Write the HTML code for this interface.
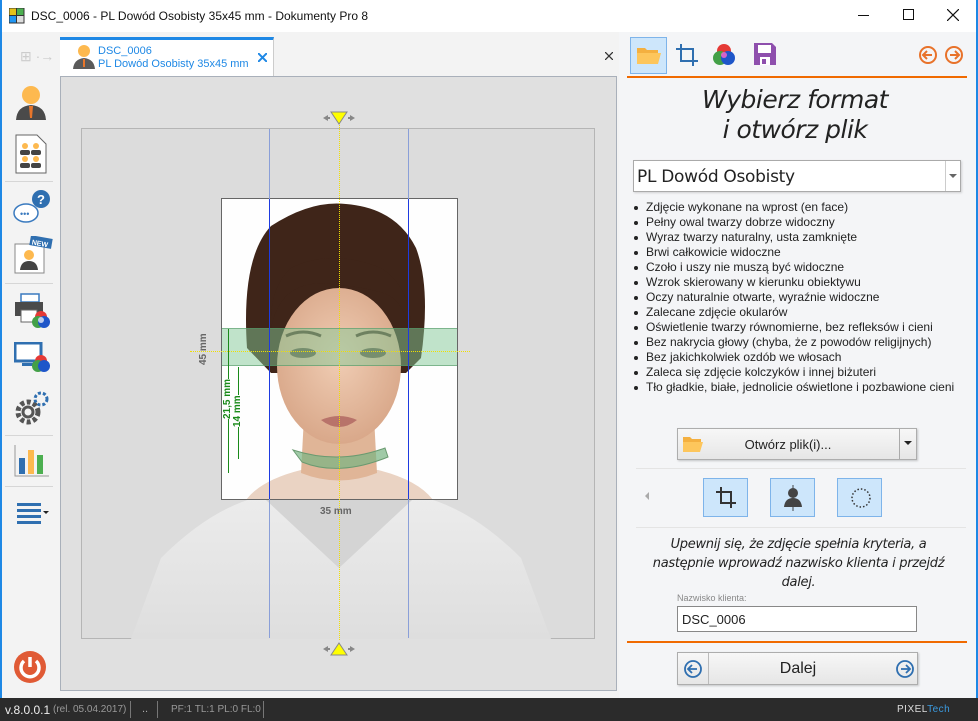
<!DOCTYPE html>
<html><head><meta charset="utf-8"><style>
*{box-sizing:border-box;margin:0;padding:0}
body{width:978px;height:721px;overflow:hidden;background:#f3f3f3;font-family:"Liberation Sans",sans-serif;position:relative;font-size:12px;color:#222}
.abs{position:absolute}
.title{left:0;top:0;width:978px;height:32px;background:#fff;font-size:12px}
.sb{left:0;top:0;width:2px;height:721px;background:#1e88e5}
.sep{position:absolute;height:1px;background:#d6d6d6}
ul{list-style:none}
li{position:relative;padding-left:14px;height:15px;line-height:15px;font-size:12px;color:#222}
li:before{content:"";position:absolute;left:2px;top:6px;width:4px;height:4px;border-radius:2px;background:#222}
.btn{background:linear-gradient(#f7f7f7,#e6e6e6);border:1px solid #adadad;box-shadow:1px 1px 2px rgba(0,0,0,.2)}
.tb{background:#cde6fb;border:1px solid #7eb4ea}
</style></head><body>
<div class="abs title">
 <svg class="abs" style="left:9px;top:8px" width="16" height="16"><rect x="0" y="0" width="7" height="7" fill="#e5c21a"/><rect x="8" y="0" width="7" height="7" fill="#4caf50"/><rect x="0" y="8" width="7" height="7" fill="#2196f3"/><rect x="8" y="8" width="7" height="7" fill="#ddd"/><rect x="0" y="0" width="15" height="15" fill="none" stroke="#333"/><line x1="7.5" y1="0" x2="7.5" y2="15" stroke="#333"/><line x1="0" y1="7.5" x2="15" y2="7.5" stroke="#333"/></svg>
 <div class="abs" style="left:31px;top:9px;color:#111">DSC_0006 - PL Dowód Osobisty 35x45 mm - Dokumenty Pro 8</div>
 <div class="abs" style="left:858px;top:15px;width:11px;height:1px;background:#111"></div>
 <div class="abs" style="left:903px;top:9px;width:11px;height:11px;border:1px solid #111"></div>
 <svg class="abs" style="left:947px;top:9px" width="12" height="12"><path d="M0 0 L12 12 M12 0 L0 12" stroke="#111" stroke-width="1.2"/></svg>
</div>
<div class="abs sb"></div>
<div class="abs" style="left:976px;top:0;width:2px;height:721px;background:#1e88e5"></div>
<!-- sidebar icons -->
<div class="abs" style="left:20px;top:48px;color:#ccc;font-size:14px">⊞ ·→</div>
<svg class="abs" style="left:14px;top:84px" width="34" height="38"><circle cx="17" cy="11" r="9" fill="#fdb94f"/><path d="M2 36 Q3 22 17 21 Q31 22 32 36Z" fill="#4a4a4a"/><path d="M15 22 L19 22 L18 34 L16 34Z" fill="#e8762b"/></svg>
<svg class="abs" style="left:15px;top:134px" width="32" height="40"><path d="M1 1 H22 L31 10 V39 H1Z" fill="#fff" stroke="#666"/><g fill="#fdb94f"><circle cx="10" cy="12" r="3"/><circle cx="21" cy="12" r="3"/><circle cx="10" cy="25" r="3"/><circle cx="21" cy="25" r="3"/></g><g fill="#444"><rect x="5" y="16" width="10" height="5" rx="2"/><rect x="16" y="16" width="10" height="5" rx="2"/><rect x="5" y="29" width="10" height="5" rx="2"/><rect x="16" y="29" width="10" height="5" rx="2"/></g></svg>
<div class="sep" style="left:5px;top:181px;width:48px"></div>
<svg class="abs" style="left:12px;top:188px" width="38" height="40"><ellipse cx="14" cy="25" rx="12" ry="9" fill="#fff" stroke="#3a7abf" stroke-width="1.5"/><text x="8" y="29" font-size="9" fill="#3a7abf">•••</text><circle cx="29" cy="11" r="9" fill="#2f6fb0"/><text x="25" y="16" font-size="13" font-weight="bold" fill="#fff" font-family="Liberation Sans">?</text></svg>
<svg class="abs" style="left:13px;top:236px" width="40" height="40"><rect x="2" y="8" width="29" height="29" fill="#fff" stroke="#888"/><circle cx="16" cy="19" r="5" fill="#fdb94f"/><path d="M7 34 Q8 25 16 25 Q24 25 25 34Z" fill="#444"/><rect x="17" y="1" width="22" height="10" fill="#2f6fb0" transform="rotate(10 28 6)"/><text x="19" y="10" font-size="7" fill="#fff" font-weight="bold" transform="rotate(10 28 6)">NEW</text></svg>
<div class="sep" style="left:5px;top:283px;width:48px"></div>
<svg class="abs" style="left:14px;top:292px" width="38" height="38"><rect x="7" y="2" width="18" height="8" fill="#fff" stroke="#3a7abf" stroke-width="1.5"/><rect x="1" y="10" width="28" height="14" fill="#4a4a4a"/><rect x="7" y="18" width="16" height="12" fill="#fff" stroke="#666"/><circle cx="27" cy="25" r="6" fill="#e53935"/><circle cx="24" cy="30" r="6" fill="#43a047"/><circle cx="30" cy="30" r="6" fill="#1e56c9"/><circle cx="27" cy="28" r="3" fill="#fff" opacity=".7"/></svg>
<svg class="abs" style="left:14px;top:342px" width="38" height="34"><rect x="1" y="1" width="26" height="18" fill="#fff" stroke="#2f6fb0" stroke-width="3"/><rect x="8" y="21" width="12" height="3" fill="#2f6fb0"/><circle cx="27" cy="19" r="6" fill="#e53935"/><circle cx="24" cy="24" r="6" fill="#43a047"/><circle cx="30" cy="24" r="6" fill="#1e56c9"/></svg>
<svg class="abs" style="left:14px;top:390px" width="36" height="36"><circle cx="14" cy="22" r="10" fill="none" stroke="#555" stroke-width="5" stroke-dasharray="4 2.5"/><circle cx="14" cy="22" r="5" fill="none" stroke="#555" stroke-width="3"/><circle cx="27" cy="9" r="6" fill="none" stroke="#2f6fb0" stroke-width="3" stroke-dasharray="3 2"/></svg>
<div class="sep" style="left:5px;top:435px;width:48px"></div>
<svg class="abs" style="left:14px;top:444px" width="36" height="34"><path d="M1 1 V32 H35" fill="none" stroke="#999"/><rect x="5" y="14" width="6" height="16" fill="#2f6fb0"/><rect x="14" y="6" width="6" height="24" fill="#fdb94f"/><rect x="23" y="11" width="6" height="19" fill="#4caf50"/></svg>
<div class="sep" style="left:5px;top:486px;width:48px"></div>
<svg class="abs" style="left:17px;top:503px" width="34" height="22"><g fill="#2f6fb0"><rect x="0" y="0" width="24" height="3"/><rect x="0" y="6" width="24" height="3"/><rect x="0" y="12" width="24" height="3"/><rect x="0" y="18" width="24" height="3"/></g><path d="M26 8 L32 8 L29 11Z" fill="#222"/></svg>
<svg class="abs" style="left:13px;top:650px" width="34" height="34"><circle cx="17" cy="17" r="16" fill="#e05a35"/><path d="M11 11 A9 9 0 1 0 23 11" fill="none" stroke="#fff" stroke-width="3.5"/><line x1="17" y1="7" x2="17" y2="17" stroke="#fff" stroke-width="3.5"/></svg>
<!-- tab -->
<div class="abs" style="left:60px;top:37px;width:214px;height:40px;background:#fff;border-top:3px solid #1e88e5;border-right:1px solid #ccc"></div>
<svg class="abs" style="left:72px;top:44px" width="24" height="26"><circle cx="12" cy="7" r="6" fill="#fdb94f"/><path d="M1 25 Q2 15 12 14 Q22 15 23 25Z" fill="#5a5a5a"/><path d="M11 15 L13 15 L13 23 L11 23Z" fill="#e8762b"/></svg>
<div class="abs" style="left:98px;top:45px;color:#1e88e5;font-size:11px;line-height:13px">DSC_0006<br>PL Dowód Osobisty 35x45 mm</div>
<svg class="abs" style="left:258px;top:53px" width="9" height="9"><path d="M0 0 L9 9 M9 0 L0 9" stroke="#1e88e5" stroke-width="2"/></svg>
<svg class="abs" style="left:605px;top:52px" width="8" height="8"><path d="M0 0 L8 8 M8 0 L0 8" stroke="#333" stroke-width="1.3"/></svg>
<!-- canvas -->
<div class="abs" style="left:60px;top:76px;width:557px;height:615px;background:#e0e0e0;border:1px solid #a9b0ba"></div>
<div class="abs" style="left:81px;top:128px;width:514px;height:511px;background:#dcdcdc;border:1px solid #b5b5b5"></div>
<svg class="abs" style="left:81px;top:128px" width="514" height="511">
 <defs><linearGradient id="sh" x1="0" y1="0" x2="0" y2="1"><stop offset="0" stop-color="#ececec"/><stop offset="1" stop-color="#dedede"/></linearGradient></defs>
 <path d="M50 511 L80 430 Q130 380 180 368 L338 368 Q390 380 440 430 L470 511Z" fill="url(#sh)"/>
 <path d="M185 372 L258 440 L331 372Z" fill="#d4d4d4"/>
</svg>
<div class="abs" style="left:221px;top:198px;width:237px;height:302px;background:#fefefe;border:1px solid #666;overflow:hidden">
<svg width="237" height="302" style="position:absolute;left:-1px;top:-1px">
 <defs><radialGradient id="sk" cx="50%" cy="45%" r="55%"><stop offset="0" stop-color="#f0cdb4"/><stop offset="1" stop-color="#d9a88a"/></radialGradient></defs>
 <path d="M25 302 Q40 282 80 272 L157 272 Q197 282 212 302Z" fill="#ead3c3"/>
 <path d="M84 200 L152 200 L156 275 Q118 290 80 275Z" fill="#e0b597"/>
 <path d="M26 150 Q20 60 50 28 Q90 2 125 6 Q175 10 195 50 Q210 90 200 160 L185 175 L50 175Z" fill="#3f2519"/>
 <ellipse cx="118" cy="168" rx="62" ry="78" fill="url(#sk)"/>
 <path d="M50 130 Q60 80 110 86 Q150 90 165 96 Q185 105 190 140 Q192 90 160 70 Q110 50 70 70 Q48 90 50 130Z" fill="#3f2519"/>
 <ellipse cx="82" cy="155" rx="13" ry="5" fill="#6b5546"/><ellipse cx="152" cy="155" rx="13" ry="5" fill="#6b5546"/>
 <path d="M65 138 Q82 130 100 138" stroke="#5a3a2a" stroke-width="3" fill="none"/><path d="M135 138 Q152 130 170 138" stroke="#5a3a2a" stroke-width="3" fill="none"/>
 <path d="M100 222 Q118 214 136 222 Q118 236 100 222Z" fill="#b8736a"/>
</svg>
</div>
<!-- green overlays -->
<div class="abs" style="left:222px;top:328px;width:235px;height:38px;background:rgba(130,200,150,.5);border-top:1px solid rgba(80,150,100,.6);border-bottom:1px solid rgba(80,150,100,.6)"></div>
<svg class="abs" style="left:290px;top:445px" width="100" height="30"><path d="M3 5 Q49 20 95 3 L98 12 Q49 32 12 17Z" fill="rgba(120,180,130,.7)" stroke="#6a9a70"/></svg>
<!-- lines -->
<div class="abs" style="left:269px;top:129px;width:1px;height:509px;background:#8a9fd8"></div>
<div class="abs" style="left:269px;top:199px;width:1px;height:300px;background:#1e3be0"></div>
<div class="abs" style="left:408px;top:129px;width:1px;height:509px;background:#8a9fd8"></div>
<div class="abs" style="left:408px;top:199px;width:1px;height:300px;background:#1e3be0"></div>
<div class="abs" style="left:339px;top:118px;width:0;height:522px;border-left:1px dotted #f0e000"></div>
<div class="abs" style="left:190px;top:351px;width:280px;height:0;border-top:1px dotted #f0e000"></div>
<svg class="abs" style="left:322px;top:111px" width="34" height="14"><path d="M9 1 L25 1 L17 13Z" fill="#ffff00" stroke="#888"/><path d="M1 7 L6 4 V10Z M33 7 L28 4 V10Z" fill="#888"/><rect x="4" y="6" width="4" height="2" fill="#888"/><rect x="26" y="6" width="4" height="2" fill="#888"/></svg>
<svg class="abs" style="left:322px;top:642px" width="34" height="14"><path d="M9 13 L25 13 L17 1Z" fill="#ffff00" stroke="#888"/><path d="M1 7 L6 4 V10Z M33 7 L28 4 V10Z" fill="#888"/><rect x="4" y="6" width="4" height="2" fill="#888"/><rect x="26" y="6" width="4" height="2" fill="#888"/></svg>
<div class="abs" style="left:198px;top:365px;transform:rotate(-90deg);transform-origin:0 0;font-size:10px;font-weight:bold;color:#666">45 mm</div>
<div class="abs" style="left:320px;top:506px;font-size:10px;font-weight:bold;color:#666">35 mm</div>
<div class="abs" style="left:228px;top:329px;width:1px;height:144px;background:#1a8a1a"></div>
<div class="abs" style="left:238px;top:367px;width:1px;height:92px;background:#1a8a1a"></div>
<div class="abs" style="left:222px;top:419px;transform:rotate(-90deg);transform-origin:0 0;font-size:10px;font-weight:bold;color:#1a8a1a;background:#fefefe">21,5 mm</div>
<div class="abs" style="left:232px;top:427px;transform:rotate(-90deg);transform-origin:0 0;font-size:10px;font-weight:bold;color:#1a8a1a;background:#fefefe">14 mm</div>
<!-- right panel -->
<div class="abs" style="left:619px;top:32px;width:357px;height:666px;background:#f4f5f7"></div>
<div class="abs tb" style="left:630px;top:37px;width:37px;height:37px"></div>
<svg class="abs" style="left:636px;top:45px" width="26" height="20"><path d="M1 3 H9 L11 5 H22 V8 H1Z" fill="#f4b040"/><path d="M1 8 H25 L22 19 H1Z" fill="#fdc65c"/></svg>
<svg class="abs" style="left:675px;top:43px" width="24" height="24"><path d="M6 1 V18 H23 M1 6 H18 V23" fill="none" stroke="#2f6fb0" stroke-width="2"/></svg>
<svg class="abs" style="left:712px;top:43px" width="24" height="24"><circle cx="12" cy="8" r="7" fill="#e53935"/><circle cx="8" cy="15" r="7" fill="#43a047"/><circle cx="16" cy="15" r="7" fill="#1e56c9"/><circle cx="12" cy="12" r="3" fill="#f6c" opacity=".8"/></svg>
<svg class="abs" style="left:754px;top:43px" width="22" height="22"><path d="M0 0 H18 L22 4 V22 H0Z" fill="#8e4fad"/><rect x="4" y="2" width="13" height="8" fill="#fff"/><rect x="6" y="14" width="10" height="8" fill="#fff"/><rect x="8" y="16" width="4" height="5" fill="#8e4fad"/></svg>
<svg class="abs" style="left:918px;top:45px" width="48" height="20"><circle cx="10" cy="10" r="8" fill="none" stroke="#e8722a" stroke-width="2"/><path d="M14 10 H6 M9 6 L5 10 L9 14" fill="none" stroke="#e8722a" stroke-width="2"/><circle cx="36" cy="10" r="8" fill="none" stroke="#e8722a" stroke-width="2"/><path d="M32 10 H40 M37 6 L41 10 L37 14" fill="none" stroke="#e8722a" stroke-width="2"/></svg>
<div class="abs" style="left:627px;top:76px;width:340px;height:2px;background:#f06a00"></div>
<div class="abs" style="left:620px;top:85px;width:350px;text-align:center;font-style:italic;font-size:25px;line-height:30px;color:#222;font-family:'DejaVu Sans',sans-serif;letter-spacing:-.5px">Wybierz format<br>i otwórz plik</div>
<div class="abs" style="left:633px;top:160px;width:328px;height:32px;background:#fff;border:1px solid #aaa;box-shadow:1px 1px 2px rgba(0,0,0,.15)">
 <div class="abs" style="left:3px;top:6px;font-size:17px;color:#222;font-family:'DejaVu Sans',sans-serif;letter-spacing:-.3px">PL Dowód Osobisty</div>
 <div class="abs" style="left:311px;top:0;width:1px;height:30px;background:#ccc"></div>
 <div class="abs" style="left:315px;top:13px;border:4px solid transparent;border-top:4px solid #666"></div>
</div>
<ul class="abs" style="left:632px;top:200px">
<li>Zdjęcie wykonane na wprost (en face)</li><li>Pełny owal twarzy dobrze widoczny</li><li>Wyraz twarzy naturalny, usta zamknięte</li><li>Brwi całkowicie widoczne</li><li>Czoło i uszy nie muszą być widoczne</li><li>Wzrok skierowany w kierunku obiektywu</li><li>Oczy naturalnie otwarte, wyraźnie widoczne</li><li>Zalecane zdjęcie okularów</li><li>Oświetlenie twarzy równomierne, bez refleksów i cieni</li><li>Bez nakrycia głowy (chyba, że z powodów religijnych)</li><li>Bez jakichkolwiek ozdób we włosach</li><li>Zaleca się zdjęcie kolczyków i innej biżuteri</li><li>Tło gładkie, białe, jednolicie oświetlone i pozbawione cieni</li>
</ul>
<div class="abs btn" style="left:677px;top:428px;width:240px;height:32px">
 <svg class="abs" style="left:4px;top:6px" width="22" height="18"><path d="M1 2 H8 L10 4 H19 V7 H1Z" fill="#f4b040"/><path d="M1 7 H21 L18 17 H1Z" fill="#fdc65c"/></svg>
 <div class="abs" style="left:0;top:8px;width:220px;text-align:center;font-size:13px">Otwórz plik(i)...</div>
 <div class="abs" style="left:221px;top:0;width:1px;height:30px;background:#aaa"></div>
 <div class="abs" style="left:226px;top:12px;border:4px solid transparent;border-top:4px solid #222"></div>
</div>
<div class="sep" style="left:636px;top:468px;width:330px;background:#e4e4e4"></div>
<div class="abs" style="left:641px;top:492px;border:4px solid transparent;border-right:4px solid #aaa"></div>
<div class="abs tb" style="left:703px;top:478px;width:45px;height:39px"><svg style="position:absolute;left:12px;top:8px" width="20" height="22"><path d="M5 0 V16 H20 M0 5 H15 V21" fill="none" stroke="#333" stroke-width="2"/></svg></div>
<div class="abs tb" style="left:770px;top:478px;width:45px;height:39px"><svg style="position:absolute;left:12px;top:6px" width="20" height="26"><circle cx="10" cy="8" r="5" fill="#444"/><path d="M1 22 Q2 13 10 13 Q18 13 19 22Z" fill="#444"/><line x1="10" y1="0" x2="10" y2="26" stroke="#444"/></svg></div>
<div class="abs tb" style="left:837px;top:478px;width:45px;height:39px"><svg style="position:absolute;left:12px;top:7px" width="22" height="24"><circle cx="11" cy="12" r="9" fill="none" stroke="#333" stroke-width="1.5" stroke-dasharray="1.5 2"/></svg></div>
<div class="sep" style="left:636px;top:527px;width:330px;background:#e4e4e4"></div>
<div class="abs" style="left:620px;top:535px;width:357px;text-align:center;font-style:italic;font-size:13px;line-height:19px;font-family:'DejaVu Sans',sans-serif;letter-spacing:-.3px;color:#222">Upewnij się, że zdjęcie spełnia kryteria, a<br>następnie wprowadź nazwisko klienta i przejdź<br>dalej.</div>
<div class="abs" style="left:677px;top:593px;font-size:9px;color:#888">Nazwisko klienta:</div>
<div class="abs" style="left:677px;top:606px;width:240px;height:26px;background:#fff;border:1px solid #888;font-size:13px;padding:5px 4px">DSC_0006</div>
<div class="abs" style="left:627px;top:641px;width:340px;height:2px;background:#f06a00"></div>
<div class="abs btn" style="left:677px;top:652px;width:241px;height:33px">
 <div class="abs" style="left:30px;top:0;width:1px;height:31px;background:#bbb"></div>
 <svg class="abs" style="left:5px;top:6px" width="20" height="20"><circle cx="10" cy="10" r="8" fill="none" stroke="#2f6fb0" stroke-width="1.8"/><path d="M14 10 H6 M9 6 L5 10 L9 14" fill="none" stroke="#2f6fb0" stroke-width="1.8"/></svg>
 <svg class="abs" style="left:217px;top:6px" width="20" height="20"><circle cx="10" cy="10" r="8" fill="none" stroke="#2f6fb0" stroke-width="1.8"/><path d="M6 10 H14 M11 6 L15 10 L11 14" fill="none" stroke="#2f6fb0" stroke-width="1.8"/></svg>
 <div class="abs" style="left:30px;top:7px;width:180px;text-align:center;font-size:16px">Dalej</div>
</div>
<!-- status -->
<div class="abs" style="left:0;top:698px;width:978px;height:23px;background:#2b2b2b;font-size:11px">
 <div class="abs" style="left:5px;top:5px;color:#eee;font-size:12px">v.8.0.0.1</div>
 <div class="abs" style="left:53px;top:6px;color:#999;font-size:10px">(rel. 05.04.2017)</div>
 <div class="abs" style="left:130px;top:3px;width:1px;height:17px;background:#777"></div>
 <div class="abs" style="left:142px;top:5px;color:#aaa">..</div>
 <div class="abs" style="left:157px;top:3px;width:1px;height:17px;background:#777"></div>
 <div class="abs" style="left:171px;top:6px;color:#999;font-size:10px">PF:1 TL:1 PL:0 FL:0</div>
 <div class="abs" style="left:263px;top:3px;width:1px;height:17px;background:#777"></div>
 <div class="abs" style="left:897px;top:6px;color:#ddd;font-size:10px;letter-spacing:.5px">PIXEL<span style="color:#3b9be0">Tech</span></div>
</div>
</body></html>
